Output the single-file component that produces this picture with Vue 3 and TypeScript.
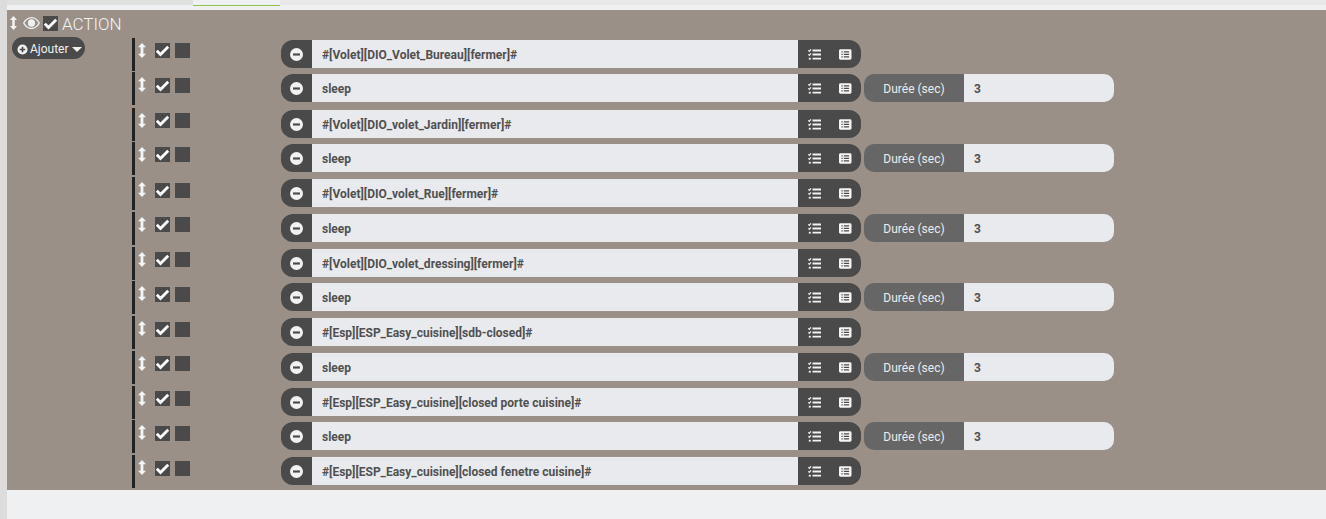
<script setup lang="ts">
interface Row { label: string; sleep: boolean }
const names: string[] = [
  '#[Volet][DIO_Volet_Bureau][fermer]#',
  'sleep',
  '#[Volet][DIO_volet_Jardin][fermer]#',
  'sleep',
  '#[Volet][DIO_volet_Rue][fermer]#',
  'sleep',
  '#[Volet][DIO_volet_dressing][fermer]#',
  'sleep',
  '#[Esp][ESP_Easy_cuisine][sdb-closed]#',
  'sleep',
  '#[Esp][ESP_Easy_cuisine][closed porte cuisine]#',
  'sleep',
  '#[Esp][ESP_Easy_cuisine][closed fenetre cuisine]#',
]
const rows: Row[] = names.map((label) => ({ label, sleep: label === 'sleep' }))
</script>

<template>
  <div class="page">
    <div class="gutter"></div>
    <div class="main">
      <div class="tabs">
        <div class="tab-left"></div>
        <div class="tab-active"></div>
        <div class="tab-rest"></div>
      </div>
      <div class="panel">
        <div class="head">
          <svg class="arrows head-arrows" viewBox="0 0 8 16" preserveAspectRatio="none"><path d="M4 0 8 4.500H5.400v7H8L4 16 0 11.500H2.600v-7H0z" /></svg>
          <svg class="eye" viewBox="0 0 18 12" preserveAspectRatio="none"><path fill-rule="evenodd" d="M9 0C5 0 2 2.500 0 6c2 3.500 5 6 9 6s7-2.500 9-6c-2-3.500-5-6-9-6zm0 1.200c3.200 0 5.700 1.900 7.400 4.800-1.700 2.900-4.200 4.800-7.400 4.800S3.300 8.900 1.600 6C3.300 3.100 5.800 1.200 9 1.200zM9 2.200a3.800 3.800 0 1 0 0 7.600 3.800 3.800 0 0 0 0-7.600z" /></svg>
          <span class="box checked">
            <svg viewBox="0 0 15 15"><path d="M1.800 7.800 5.500 11.500 13.200 3.800" /></svg>
          </span>
          <span class="title">ACTION</span>
        </div>
        <div class="body">
          <div class="side">
            <button class="add">
              <svg class="plus" viewBox="0 0 12 12"><circle cx="6" cy="6" r="5.500" /><path d="M3 6h6M6 3v6" /></svg>
              <span>Ajouter</span>
              <i class="caret"></i>
            </button>
          </div>
          <div class="list">
            <div v-for="(row, i) in rows" :key="i" class="row" :class="{ 'row-sleep': row.sleep }">
              <div class="controls">
                <svg class="arrows" viewBox="0 0 8 16" preserveAspectRatio="none"><path d="M4 0 8 4.500H5.400v7H8L4 16 0 11.500H2.600v-7H0z" /></svg>
                <span class="box checked">
                  <svg viewBox="0 0 15 15"><path d="M1.800 7.800 5.500 11.500 13.200 3.800" /></svg>
                </span>
                <span class="box"></span>
              </div>
              <div class="group">
                <span class="cap-left">
                  <svg class="minus" viewBox="0 0 12 12"><circle cx="6" cy="6" r="6" /><path d="M2.800 6h6.400" /></svg>
                </span>
                <span class="field">{{ row.label }}</span>
                <span class="cap-right">
                  <svg class="tasks" viewBox="0 0 13 11">
                    <path class="tick" d="M.3 1.300 1.300 2.300 3 .3M.3 5.300 1.300 6.300 3 4.300" />
                    <path class="tick thick" d="M.8 9.700h2" />
                    <path class="bar" d="M4.500 1.500H13M4.500 5.500H13M4.500 9.700H13" />
                  </svg>
                  <svg class="listbox" viewBox="0 0 13 11">
                    <path fill-rule="evenodd" d="M1.500 0h10A1.500 1.500 0 0 1 13 1.500v8a1.500 1.500 0 0 1-1.500 1.500h-10A1.500 1.500 0 0 1 0 9.500v-8A1.500 1.500 0 0 1 1.500 0zM2.500 2.200v1.300h1.300V2.200zM5 2.200v1.300h5.500V2.200zM2.500 4.800v1.300h1.300V4.800zM5 4.800v1.300h5.500V4.800zM2.500 7.400v1.300h1.300V7.400zM5 7.400v1.300h5.500V7.400z" />
                  </svg>
                </span>
              </div>
              <div v-if="row.sleep" class="duration">
                <span class="dur-label">Durée (sec)</span>
                <span class="dur-value">3</span>
              </div>
            </div>
          </div>
        </div>
      </div>
    </div>
  </div>
</template>

<style>
html, body { margin: 0; background: #eef0f2; overflow: hidden; }
</style>

<style scoped>
.page {
  display: flex;
  width: 1326px;
  height: 519px;
  font-family: Roboto, "Liberation Sans", sans-serif;
  background: #eef0f2;
}
.gutter { width: 7px; flex: none; background: #dcdcdc; }
.main { flex: 1; min-width: 0; }
.tabs { display: flex; height: 10px; }
.tab-left { width: 186px; height: 5px; background: #dfe1df; }
.tab-active { width: 87px; height: 5px; border-bottom: 1px solid #8fc34a; }
.tab-rest { flex: 1; height: 5px; background: #e8e8e8; }
.panel { height: 480px; background: #9a9088; display: flex; flex-direction: column; }
.head {
  height: 28px;
  display: flex;
  align-items: flex-start;
  color: #eef0f2;
}
.arrows { width: 8px; height: 15px; fill: #f4f4f4; display: block; flex: none; }
.head-arrows { width: 7px; height: 14px; margin: 6px 0 0 3px; }
.eye { width: 17px; height: 12px; fill: #eef0f2; margin: 7px 0 0 6px; flex: none; }
.head .box { margin: 6px 0 0 3px; }
.title { font-size: 17px; font-weight: 300; margin-left: 4px; color: #f2f4f6; line-height: 28px; }
.box {
  width: 15px;
  height: 15px;
  background: #4a4a4a;
  display: block;
  flex: none;
}
.box svg { display: block; width: 15px; height: 15px; fill: none; stroke: #fff; stroke-width: 2.800; }
.body { display: flex; flex: 1; }
.side { width: 125px; flex: none; padding-left: 5px; box-sizing: border-box; }
.add {
  display: flex;
  align-items: center;
  width: 73px;
  height: 22px;
  margin-top: -1px;
  padding: 2px 0 0 5px;
  border: 0;
  border-radius: 11px;
  background: #4a4a4a;
  color: #f0f0f0;
  font: 12px Roboto, sans-serif;
  box-sizing: border-box;
}
.plus { width: 11px; height: 11px; flex: none; margin-right: 2px; }
.plus circle, .minus circle { fill: #f2f2f2; }
.plus path { stroke: #4a4a4a; stroke-width: 1.800; fill: none; }
.minus path { stroke: #4a4a4a; stroke-width: 2; fill: none; }
.caret {
  width: 0;
  height: 0;
  margin-left: 3px;
  border-left: 5px solid transparent;
  border-right: 5px solid transparent;
  border-top: 5px solid #f2f2f2;
}
.list { flex: 1; }
.row {
  height: 34.400px;
  display: flex;
  align-items: flex-start;
}
.row-sleep { height: 35.200px; }
.controls {
  width: 149px;
  height: 33px;
  flex: none;
  border-left: 3px solid #222;
  display: flex;
  box-sizing: border-box;
}
.controls .arrows { margin: 5px 0 0 3px; }
.controls .box { margin: 5.400px 5px 0 0; }
.controls .box.checked { margin-left: 9px; }
.group { display: flex; height: 28px; width: 580px; flex: none; margin-top: 2px; }
.cap-left {
  width: 31px;
  background: #4a4a4a;
  border-radius: 12px 0 0 12px;
  display: flex;
  align-items: center;
  justify-content: center;
}
.minus { width: 13px; height: 13px; display: block; margin-top: 1px; }
.field {
  flex: 1;
  background: #e9eaee;
  color: #505050;
  font-size: 12px;
  font-weight: 700;
  line-height: 30px;
  padding-left: 10px;
  white-space: nowrap;
}
.cap-right {
  width: 63px;
  background: #4a4a4a;
  border-radius: 0 12px 12px 0;
  display: flex;
  align-items: center;
  box-sizing: border-box;
  padding: 1px 0 0 10px;
}
.tasks { width: 13px; height: 11px; fill: none; display: block; flex: none; }
.tick { stroke: #f2f2f2; stroke-width: 1.200; }
.thick { stroke-width: 1.800; }
.bar { stroke: #f2f2f2; stroke-width: 1.800; }
.listbox { width: 12.500px; height: 11px; fill: #f6f6f6; margin-left: 18px; display: block; flex: none; }
.duration { display: flex; height: 28px; width: 250px; margin-left: 3px; margin-top: 2px; flex: none; }
.dur-label {
  width: 100px;
  background: #666;
  color: #ececec;
  font-size: 12px;
  line-height: 30px;
  text-align: center;
  border-radius: 10px 0 0 10px;
}
.dur-value {
  flex: 1;
  background: #e9eaee;
  color: #505050;
  font-size: 12px;
  font-weight: 700;
  line-height: 30px;
  padding-left: 10px;
  border-radius: 0 10px 10px 0;
}
</style>
